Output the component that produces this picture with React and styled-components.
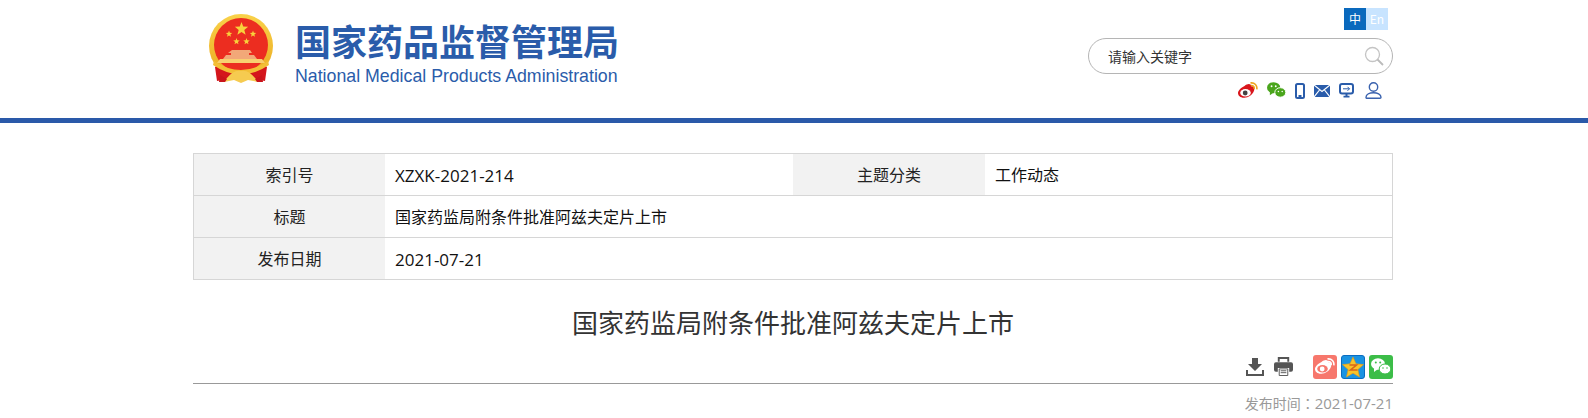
import React from "react";
import styled, { createGlobalStyle } from "styled-components";

const GlobalStyle = createGlobalStyle`
  html, body {
    margin: 0;
    padding: 0;
    background: #fff;
    font-family: "Liberation Sans", "Noto Sans CJK SC", sans-serif;
    overflow: hidden;
  }
`;

const Page = styled.div`
  width: 1588px;
  height: 418px;
  overflow: hidden;
`;

const Header = styled.header`
  height: 118px;
  border-bottom: 5px solid #2a59a9;
`;

const Wrap = styled.div`
  width: 1200px;
  margin: 0 auto;
  position: relative;
  left: -1px;
`;

const HeaderInner = styled(Wrap)`
  display: flex;
  justify-content: space-between;
`;

const Brand = styled.div`
  display: flex;
  padding: 13px 0 0 15px;
`;

const BrandText = styled.div`
  margin-left: 21px;
  padding-top: 5px;
  color: #2a5caa;
`;

const BrandCn = styled.div`
  font: 700 36px/44px "Noto Sans CJK SC", sans-serif;
  white-space: nowrap;
`;

const BrandEn = styled.div`
  font: 17.75px/20px "Liberation Sans", sans-serif;
  margin-top: 4px;
  white-space: nowrap;
`;

const Tools = styled.div`
  width: 305px;
  padding-top: 8px;
  display: flex;
  flex-direction: column;
  align-items: flex-end;
`;

const Lang = styled.div`
  display: flex;
  margin-right: 5px;
`;

const LangItem = styled.span`
  width: 22px;
  height: 22px;
  font: 12px/22px "Noto Sans CJK SC", sans-serif;
  text-align: center;
  color: #fff;
  background: ${(p) => (p.$on ? "#0a69bd" : "#c8e4ff")};
`;

const Search = styled.div`
  width: 305px;
  height: 36px;
  box-sizing: border-box;
  margin-top: 8px;
  border: 1px solid #b5b5b5;
  border-radius: 18px;
  padding: 0 8px 0 19px;
  display: flex;
  align-items: center;
  justify-content: space-between;
  font: 14px/33px "Noto Sans CJK SC", sans-serif;
  color: #333;
`;

const Links = styled.div`
  display: flex;
  align-items: center;
  gap: 9px;
  margin-top: 8px;
  padding-right: 11px;

  svg:last-child {
    margin-left: 2px;
  }
`;

const Table = styled.div`
  display: grid;
  grid-template-columns: 191px 408px 192px 1fr;
  grid-auto-rows: 41px;
  gap: 1px 0;
  margin-top: 30px;
  background: #d6d6d6;
  border: 1px solid #d6d6d6;
  box-sizing: border-box;
`;

const Label = styled.div`
  background: #f2f2f2;
  text-align: center;
  font: 16px/41px "Noto Sans CJK SC", sans-serif;
  color: #222;
`;

const Value = styled.div`
  background: #fff;
  padding-left: 10px;
  overflow: hidden;
  font: ${(p) => (p.$latin ? "17px" : "16px")}/43px "Open Sans", "Noto Sans CJK SC", sans-serif;
  color: #111;
  grid-column: ${(p) => (p.$wide ? "2 / 5" : "auto")};
`;

const Title = styled.h1`
  margin: 22px 0 0;
  text-align: center;
  font: 400 26px/40px "Noto Sans CJK SC", sans-serif;
  color: #333;
`;

const ActionBar = styled.div`
  display: flex;
  justify-content: flex-end;
  align-items: center;
  height: 33px;
  border-bottom: 1px solid #999;
  margin-top: 8px;
`;

const ActionIcons = styled.div`
  display: flex;
  align-items: center;
  gap: 10px;
  margin-right: 20px;
`;

const Shares = styled.div`
  display: flex;
  gap: 4px;
`;

const ShareBtn = styled.div`
  width: 24px;
  height: 24px;
  box-sizing: border-box;
  border-radius: 3px;
  background: ${(p) => p.$bg};
  border: ${(p) => (p.$edge ? `1px solid ${p.$edge}` : "none")};
  display: flex;
  align-items: center;
  justify-content: center;
`;

const PubTime = styled.div`
  text-align: right;
  margin-top: 8px;
  font: 14px/22px "Noto Sans CJK SC", sans-serif;
  color: #999;
`;

const Colon = styled.span`
  font-family: "Noto Sans CJK TC", sans-serif;
`;

const PubDate = styled.span`
  font: 15px/22px "Open Sans", sans-serif;
`;

const star = (x, y, r) => {
  const pts = [];
  for (let i = 0; i < 10; i++) {
    const rad = i % 2 ? r * 0.42 : r;
    const a = (Math.PI / 5) * i - Math.PI / 2;
    pts.push(`${(x + rad * Math.cos(a)).toFixed(2)},${(y + rad * Math.sin(a)).toFixed(2)}`);
  }
  return pts.join(" ");
};

const Emblem = () => (
  <svg width="66" height="70" viewBox="0 0 66 70">
    <defs>
      <linearGradient id="ring" x1="0" y1="0" x2="0" y2="1">
        <stop offset="0" stopColor="#f9d24a" />
        <stop offset="1" stopColor="#eaa91f" />
      </linearGradient>
    </defs>
    <circle cx="33" cy="33" r="32" fill="url(#ring)" />
    <circle cx="33" cy="32" r="27" fill="#ec2d20" />
    <polygon points={star(33.5, 16, 7)} fill="#f8d23c" />
    <polygon points={star(21, 21, 3.4)} fill="#f8d23c" />
    <polygon points={star(45, 21, 3.4)} fill="#f8d23c" />
    <polygon points={star(28.5, 28.5, 3.4)} fill="#f8d23c" />
    <polygon points={star(38.5, 28.5, 3.4)} fill="#f8d23c" />
    <path d="M24 37 h18 l2 3 h-3 v2 h5 l3 4 h-34 l3-4 h5 v-2 h-3z" fill="#f2a878" />
    <path d="M12 46 h42 l3 4 h-48z" fill="#f8d070" />
    <path d="M10 52 Q33 66 56 52 L59 54 L57 68 L46 66 L33 60 L20 66 L9 68 L7 54 Z" fill="#d4161c" />
    <path d="M6 48 Q33 66 60 48 L61 52 Q33 71 5 52 Z" fill="#f3bf36" />
    <path d="M18 66 Q26 56 33 58 Q40 56 48 66 L50 69 L40 67 L33 70 L26 67 L16 69 Z" fill="#f6cb50" />
    <path d="M12 62 L19 66 L17 69 L11 69 Z M54 62 L47 66 L49 69 L55 69 Z" fill="#c9141b" />
  </svg>
);

const Weibo = ({ body = "#d9161c", eye = "#fff", pupil = "#444", arc = "#eda51f" }) => (
  <svg width="20" height="17" viewBox="0 0 20 17">
    <path d="M6.500 4c3-2.500 6.500-2.800 6.800.3 2.600-.2 3.700 2 2.700 4.500 -1.400 4-6 7.200-10 7 -3.800-.1-6-2.200-6-4.800 0-2.400 3-5.300 6.500-7z" fill={body} />
    <ellipse cx="7.500" cy="10.800" rx="5.300" ry="3.700" fill={eye} />
    <circle cx="7.200" cy="11" r="2.400" fill={pupil} />
    <path d="M12.500 .9c4.200-.5 7 2.500 6.300 6.500M12.800 3.500c2.400-.3 3.800 1.200 3.300 3.500" fill="none" stroke={arc} strokeWidth="1.600" />
  </svg>
);

const Wechat = ({ a = "#4aa51c", b = "#4aa51c", eye = "#fff", gap = "#fff", width = 19 }) => (
  <svg width={width} height={width * 0.85} viewBox="0 0 20 17">
    <ellipse cx="7" cy="6" rx="7" ry="5.800" fill={a} />
    <path d="M3 10 l0 4 4-3z" fill={a} />
    <ellipse cx="14" cy="11" rx="5.800" ry="5" fill={b} stroke={gap} strokeWidth="1" />
    <circle cx="4.800" cy="4.500" r="1" fill={eye} />
    <circle cx="9.200" cy="4.500" r="1" fill={eye} />
    <circle cx="12" cy="10" r=".8" fill={eye} />
    <circle cx="16" cy="10" r=".8" fill={eye} />
  </svg>
);

const Phone = () => (
  <svg width="10" height="16" viewBox="0 0 10 16">
    <rect x="1" y="1" width="8" height="14" rx="1.500" fill="#fff" stroke="#2a5caa" strokeWidth="2" />
    <rect x="3.500" y="12" width="3" height="2" fill="#2a5caa" />
  </svg>
);

const Mail = () => (
  <svg width="16" height="12" viewBox="0 0 16 12">
    <rect width="16" height="12" fill="#2a5caa" />
    <path d="M0 0 L8 6.500 L16 0 M0 12 L5.500 5 M16 12 L10.500 5" fill="none" stroke="#fff" strokeWidth="1.200" />
  </svg>
);

const Screen = () => (
  <svg width="15" height="15" viewBox="0 0 15 15">
    <rect x="1" y="1" width="13" height="9.500" rx="2" fill="#fff" stroke="#2a5caa" strokeWidth="2" />
    <path d="M4 5.800 h6.500 M8.500 3.800 l2 2 -2 2" fill="none" stroke="#2a5caa" strokeWidth="1" />
    <path d="M6.500 11 h2 v1.800 h2 v1.700 h-6 v-1.700 h2z" fill="#2a5caa" />
  </svg>
);

const User = () => (
  <svg width="17" height="17" viewBox="0 0 17 17">
    <circle cx="8.500" cy="5" r="4.200" fill="none" stroke="#3a62ae" strokeWidth="1.400" />
    <path d="M1 15.300 c0-6 15-6 15 0 c0 1-.5 1-1 1 h-13 c-.5 0-1 0-1-1z" fill="none" stroke="#3a62ae" strokeWidth="1.400" strokeLinejoin="round" />
  </svg>
);

const Magnifier = () => (
  <svg width="20" height="20" viewBox="0 0 20 20">
    <circle cx="8.500" cy="8.500" r="7" fill="none" stroke="#c4c4c4" strokeWidth="1.300" />
    <path d="M13.500 13.500 L19 19" stroke="#bbb" strokeWidth="1.800" />
  </svg>
);

const Download = () => (
  <svg width="18" height="18" viewBox="0 0 18 18">
    <path d="M6 0 h6 v6 h4 l-7 7 -7-7 h4z M0 12 h2 v4 h14 v-4 h2 v6 h-18z" fill="#555" />
  </svg>
);

const Printer = () => (
  <svg width="19" height="19" viewBox="0 0 20 20">
    <path d="M4 0 h12 v5 h-2 v-3 h-8 v3 h-2z" fill="#555" />
    <path d="M2 5.500 h16 a2 2 0 0 1 2 2 v6 a2 2 0 0 1-2 2 h-2 v-4 h-12 v4 h-2 a2 2 0 0 1-2-2 v-6 a2 2 0 0 1 2-2z" fill="#555" />
    <path d="M5.500 12.500 h9 v7 h-9z M7 14.500 h6 M7 16.500 h6" fill="#fff" stroke="#555" strokeWidth="1" />
  </svg>
);

const QzoneStar = () => (
  <svg width="22" height="22" viewBox="0 0 22 22">
    <path d="M11 1 l3 6.800 7.500.8 -5.600 5 1.600 7.400 -6.500-3.800 -6.500 3.800 1.600-7.400 -5.600-5 7.500-.8z" fill="#f8c32a" stroke="#e89a10" strokeWidth=".6" />
    <path d="M7.500 9 h7 l-6 5 h7" fill="none" stroke="#d8641a" strokeWidth="1.600" />
  </svg>
);

export default function App() {
  return (
    <Page>
      <GlobalStyle />
      <Header>
        <HeaderInner>
          <Brand>
            <Emblem />
            <BrandText>
              <BrandCn>国家药品监督管理局</BrandCn>
              <BrandEn>National Medical Products Administration</BrandEn>
            </BrandText>
          </Brand>
          <Tools>
            <Lang>
              <LangItem $on>中</LangItem>
              <LangItem>En</LangItem>
            </Lang>
            <Search>
              请输入关键字
              <Magnifier />
            </Search>
            <Links>
              <Weibo />
              <Wechat />
              <Phone />
              <Mail />
              <Screen />
              <User />
            </Links>
          </Tools>
        </HeaderInner>
      </Header>
      <Wrap>
        <Table>
          <Label>索引号</Label>
          <Value $latin>XZXK-2021-214</Value>
          <Label>主题分类</Label>
          <Value>工作动态</Value>
          <Label>标题</Label>
          <Value $wide>国家药监局附条件批准阿兹夫定片上市</Value>
          <Label>发布日期</Label>
          <Value $wide $latin>2021-07-21</Value>
        </Table>
        <Title>国家药监局附条件批准阿兹夫定片上市</Title>
        <ActionBar>
          <ActionIcons>
            <Download />
            <Printer />
          </ActionIcons>
          <Shares>
            <ShareBtn $bg="#f7776c">
              <Weibo body="#fff" eye="#f7776c" pupil="#fff" arc="#fff" />
            </ShareBtn>
            <ShareBtn $bg="#1a93e2" $edge="#0a6cc0">
              <QzoneStar />
            </ShareBtn>
            <ShareBtn $bg="#3cbd48">
              <Wechat a="#fff" b="#fff" eye="#3cbd48" gap="#3cbd48" width={20} />
            </ShareBtn>
          </Shares>
        </ActionBar>
        <PubTime>
          发布时间<Colon>：</Colon>
          <PubDate>2021-07-21</PubDate>
        </PubTime>
      </Wrap>
    </Page>
  );
}
